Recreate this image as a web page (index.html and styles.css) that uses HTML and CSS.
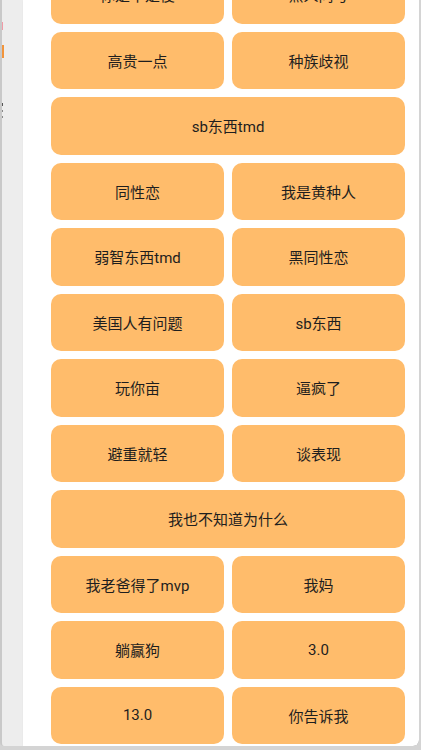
FILE: index.html
```html
<!DOCTYPE html>
<html lang="zh-CN">
<head>
    <meta charset="UTF-8">
    <meta name="viewport" content="width=device-width, initial-scale=1.0">
    <title>语音按钮</title>
    <link rel="stylesheet" href="styles.css">
</head>
<body>
    <div class="screen">
        <div class="side">
            <span class="mark pink"></span>
            <span class="mark orange"></span>
            <span class="mark dark"></span>
            <span class="mark dark small"></span>
            <span class="mark dark small"></span>
        </div>
        <div class="panel">
            <div class="buttons">
                <button class="button">你是不是傻</button>
                <button class="button">黑人问号</button>

                <button class="button">高贵一点</button>
                <button class="button">种族歧视</button>

                <button class="button wide">sb东西tmd</button>

                <button class="button">同性恋</button>
                <button class="button">我是黄种人</button>

                <button class="button">弱智东西tmd</button>
                <button class="button">黑同性恋</button>

                <button class="button">美国人有问题</button>
                <button class="button">sb东西</button>

                <button class="button">玩你亩</button>
                <button class="button">逼疯了</button>

                <button class="button">避重就轻</button>
                <button class="button">谈表现</button>

                <button class="button wide">我也不知道为什么</button>

                <button class="button">我老爸得了mvp</button>
                <button class="button">我妈</button>

                <button class="button">躺赢狗</button>
                <button class="button">3.0</button>

                <button class="button">13.0</button>
                <button class="button">你告诉我</button>
            </div>
        </div>
    </div>
</body>
</html>
```

FILE: styles.css
```css
body {
    margin: 0;
    height: 750px;
    overflow: hidden;
    background-color: #d4d4d4;
    font-family: Roboto, "Noto Sans CJK SC", sans-serif;
}

.screen {
    display: flex;
    height: 746px;
    margin-right: 2px;
    background-color: #ededed;
    border-left: 2px solid #c9c9c9;
    border-radius: 0 0 6px 4px;
    overflow: hidden;
}

.side {
    width: 21px;
    display: flex;
    flex-direction: column;
}

.mark {
    display: block;
    width: 2px;
    margin-left: -1px;
}

.mark.pink {
    height: 8px;
    margin-top: 22px;
    background: #f19aa6;
}

.mark.orange {
    width: 3px;
    height: 13px;
    margin-top: 15px;
    background: #f2943a;
}

.mark.dark {
    height: 3px;
    margin-top: 45px;
    background: #555;
}

.mark.dark.small {
    height: 2px;
    margin-top: 4px;
    background: #888;
}

.panel {
    flex: 1;
    background: #fff;
    border-radius: 0 0 6px 0;
    box-shadow: 1px 1px 2px rgba(0, 0, 0, 0.25);
    overflow: hidden;
}

.buttons {
    display: grid;
    grid-template-columns: repeat(2, 1fr);
    grid-auto-rows: 57.5px;
    gap: 8px;
    width: 354px;
    margin: -34px 0 0 28px;
}

.button {
    border: none;
    border-radius: 10px;
    background: #ffbc6b;
    color: #1e1e1e;
    font-family: Roboto, "Noto Sans CJK SC", sans-serif;
    font-size: 15px;
    padding: 0;
}

.button.wide {
    grid-column: span 2;
}
```
